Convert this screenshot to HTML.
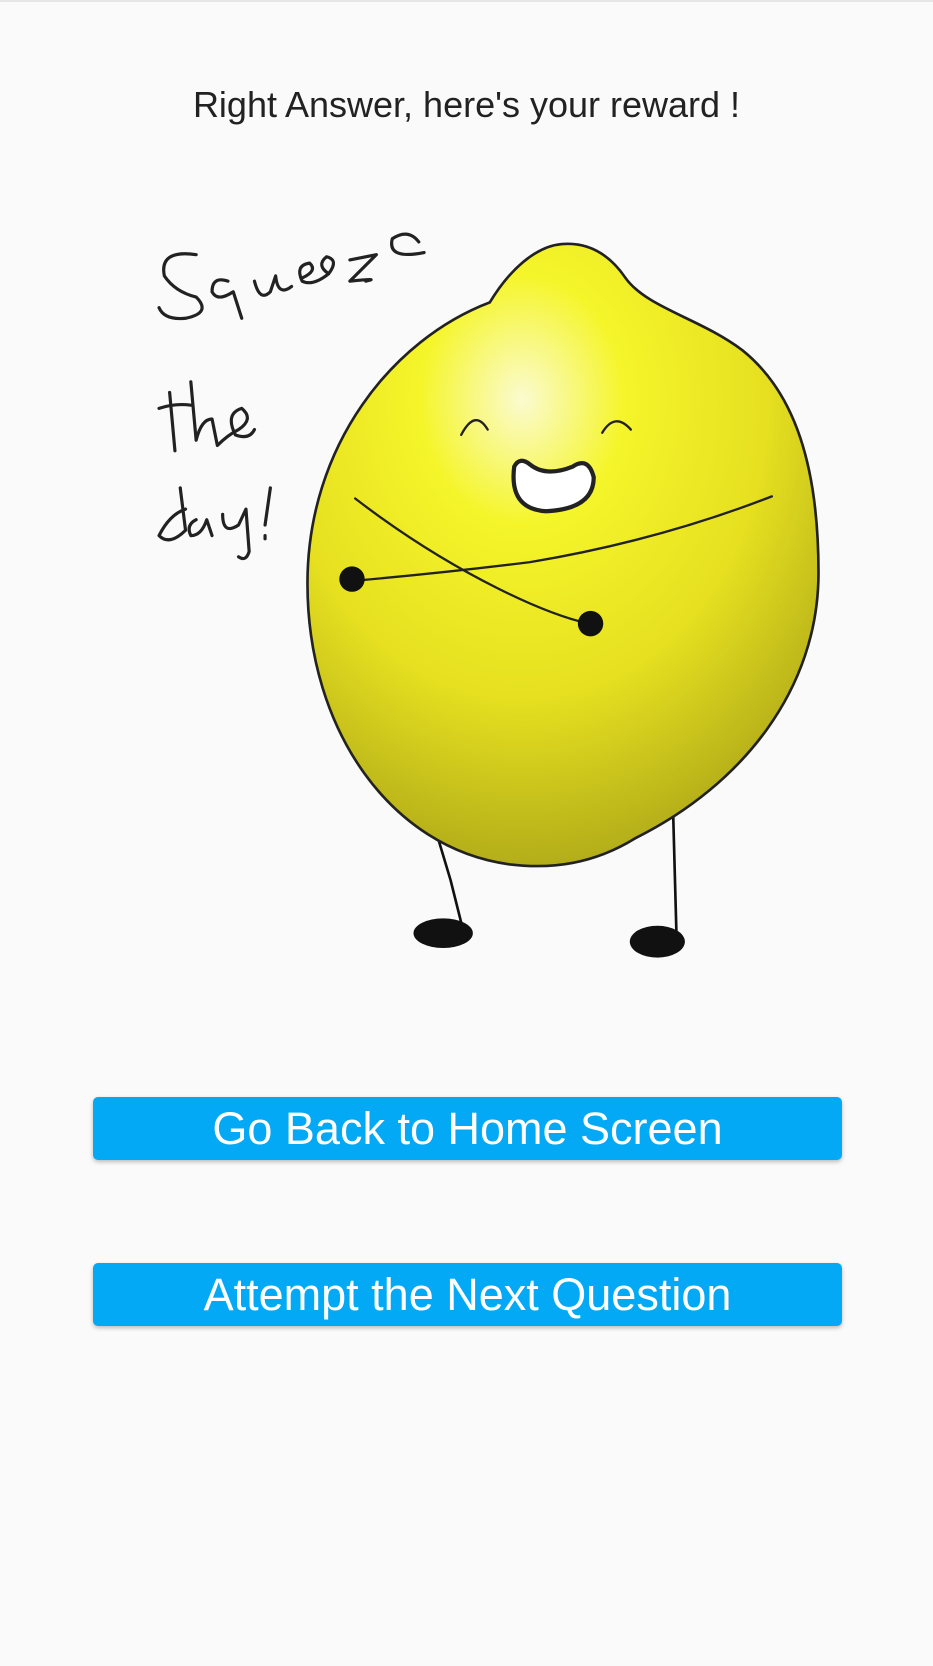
<!DOCTYPE html>
<html><head><meta charset="utf-8"><style>
html,body{margin:0;padding:0;background:#fafafa;width:933px;height:1666px;overflow:hidden;font-family:"Liberation Sans",sans-serif}
.top{position:absolute;left:0;top:0;width:933px;height:2px;background:#e6e6e6}
.t{position:absolute;top:84px;left:0;width:933px;text-align:center;font-size:36px;color:#222}
.b{position:absolute;left:93px;width:749px;height:63px;background:#03a9f4;border-radius:5px;box-shadow:0 2px 4px rgba(0,0,0,.25);color:#fff;text-align:center;font-size:45px;line-height:63px}
svg{position:absolute;left:0;top:0}
</style></head><body>
<div class="top"></div>
<div class="t">Right Answer, here's your reward !</div>
<svg width="933" height="1666" viewBox="0 0 880 1571">
<defs><radialGradient id="g" cx="0.42" cy="0.25" r="0.8"><stop offset="0" stop-color="#fbfbd0"/><stop offset="0.25" stop-color="#f5f52a"/><stop offset="0.6" stop-color="#e6e020"/><stop offset="1" stop-color="#aaa418"/></radialGradient></defs>
<g fill="none" stroke="#111" stroke-width="2.5" stroke-linecap="round">
<path d="M410 780 L425 830 L435 870"/><path d="M635 770 L638 880"/>
</g>
<ellipse cx="418" cy="880" rx="28" ry="14" fill="#111"/>
<ellipse cx="620" cy="888" rx="26" ry="15" fill="#111"/>
<path d="M530 230 C505 232 480 255 462 285 C370 320 290 420 290 550 C290 690 370 800 480 815 C520 820 560 815 600 790 C700 740 772 650 772 540 C772 440 750 370 700 330 C660 300 610 290 590 262 C575 240 555 228 530 230 Z" fill="url(#g)" stroke="#222" stroke-width="2.5"/>
<g fill="none" stroke="#222" stroke-width="2.2" stroke-linecap="round">
<path d="M435 410 Q448 385 460 405"/><path d="M568 408 Q580 388 595 405"/>
<path d="M330 548 Q420 540 500 530 Q620 510 728 468"/>
<path d="M335 470 Q400 520 470 555 Q520 580 555 588"/>
</g>
<path d="M485 440 Q480 480 515 482 Q560 480 560 450 Q555 430 540 440 Q515 450 500 438 Q490 430 485 440 Z" fill="#fff" stroke="#222" stroke-width="4"/>
<circle cx="332" cy="546" r="12" fill="#111"/><circle cx="557" cy="588" r="12" fill="#111"/>
<g fill="none" stroke="#222" stroke-width="3" stroke-linecap="round" stroke-linejoin="round">
<path d="M185 240 Q150 235 155 260 Q165 275 185 280 Q200 295 175 300 Q155 302 150 290"/>
<path d="M215 265 Q200 260 200 275 Q205 285 220 275 L228 300"/>
<path d="M240 265 Q245 285 255 275 L260 260 Q262 280 275 270"/>
<path d="M285 262 Q300 255 292 248 Q278 250 285 265 Q295 270 310 258 Q320 245 308 242 Q298 250 310 258"/>
<path d="M330 245 L355 240 L330 265 Q360 262 345 265"/>
<path d="M395 228 Q385 215 370 225 Q365 245 400 238"/>
<path d="M160 370 L165 425 M150 385 Q165 380 180 382 M180 360 L185 415 Q190 395 200 395 L205 420 Q215 410 225 405 Q240 395 228 385 Q212 390 222 410 Q235 415 240 405"/>
<path d="M175 480 Q160 485 150 505 Q160 515 175 500 L170 460 M185 490 Q175 495 180 505 Q190 505 195 490 L200 505 M210 485 Q210 505 225 495 L232 480 L235 520 Q232 530 225 525 M255 460 L250 495 M250 505 L250 508"/>
</g>
</svg>
<div class="b" style="top:1097px">Go Back to Home Screen</div>
<div class="b" style="top:1263px">Attempt the Next Question</div>
</body></html>
